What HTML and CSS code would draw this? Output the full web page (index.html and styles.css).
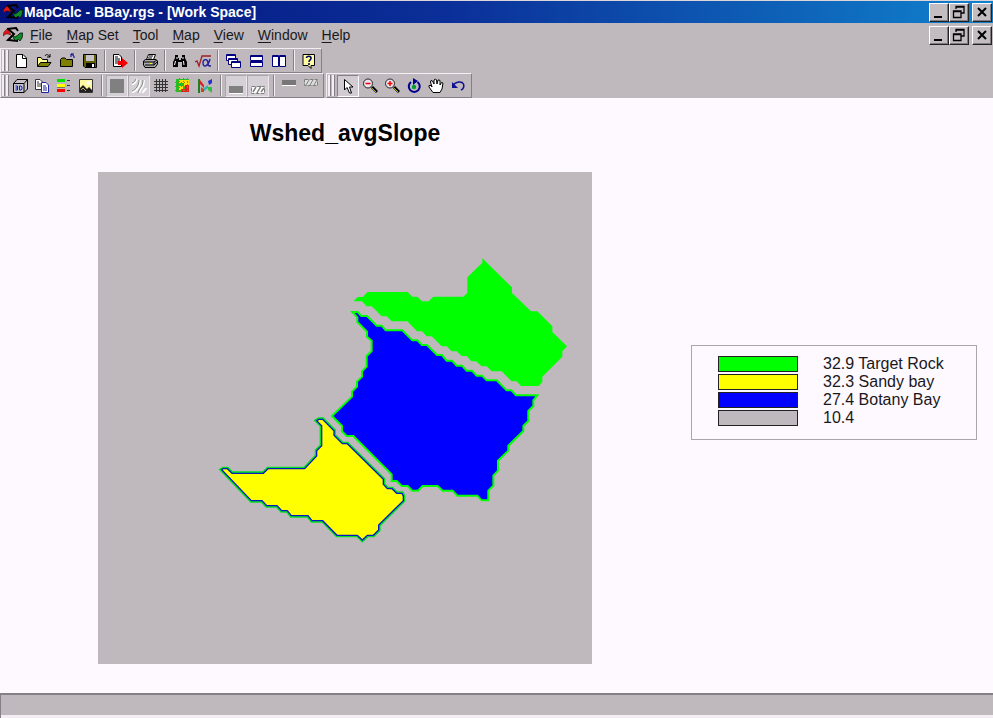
FILE: index.html
```html
<!DOCTYPE html>
<html lang="en">
<head>
<meta charset="utf-8">
<title>MapCalc - BBay.rgs - [Work Space]</title>
<link rel="stylesheet" href="styles.css">
</head>
<body>
<svg class="defs" aria-hidden="true">
  <symbol id="logo" viewBox="0 0 20 16">
    <path d="M4 2L13 1L15 4M5 2L11 7L5 13L15 14" fill="none" stroke="#000" stroke-width="2"/>
    <path d="M0 9L1 5L4 2L6 4L8 8L5 7L3 7Z" fill="#e01818" stroke="#400" stroke-width=".5"/>
    <path d="M9 8L12 10L15 8L17 6L20 6L19 11L17 14L15 12L13 14L11 12Z" fill="#108a28" stroke="#000" stroke-width=".7"/>
  </symbol>
  <symbol id="min" viewBox="0 0 16 14"><path d="M3 11H11V13H3Z"/></symbol>
  <symbol id="restore" viewBox="0 0 16 14"><path d="M5 4V1.500H13V8H10M5 2H13M2.500 6H10V12.500H2.500ZM2.500 6.500H10" fill="none" stroke="#000" stroke-width="1.300"/></symbol>
  <symbol id="close" viewBox="0 0 16 14"><path d="M4 3L12 11M12 3L4 11" stroke="#000" stroke-width="2"/></symbol>
</svg>

<header class="titlebar">
  <svg class="logo"><use href="#logo"/></svg>
  <h1 class="caption">MapCalc - BBay.rgs - [Work Space]</h1>
  <div class="controls">
    <button aria-label="Minimize"><svg><use href="#min"/></svg></button>
    <button aria-label="Restore"><svg><use href="#restore"/></svg></button>
    <button class="apart" aria-label="Close"><svg><use href="#close"/></svg></button>
  </div>
</header>

<nav class="menubar">
  <svg class="logo"><use href="#logo"/></svg>
  <div class="menus">
    <button><u>F</u>ile</button>
    <button><u>M</u>ap Set</button>
    <button><u>T</u>ool</button>
    <button><u>M</u>ap</button>
    <button><u>V</u>iew</button>
    <button><u>W</u>indow</button>
    <button><u>H</u>elp</button>
  </div>
  <div class="controls">
    <button aria-label="Minimize map"><svg><use href="#min"/></svg></button>
    <button aria-label="Restore map"><svg><use href="#restore"/></svg></button>
    <button class="apart" aria-label="Close map"><svg><use href="#close"/></svg></button>
  </div>
</nav>

<div class="toolrow">
  <div class="toolbar standard">
    <button aria-label="New"><svg viewBox="0 0 16 16"><path d="M3.500 1.500H10L13.500 5V14.500H3.500Z" fill="#fff" stroke="#000"/><path d="M9.500 1.500V5.500H13.500" fill="none" stroke="#000"/></svg></button>
    <button aria-label="Open"><svg viewBox="0 0 16 16"><path d="M1.500 13.500V4.500H5L6.500 6.500H11.500V9" fill="#ffff90" stroke="#000"/><path d="M1.500 13.500L4.500 9.500H15L12 13.500Z" fill="#808000" stroke="#000"/><path d="M9 3C10 1 12 1 14 4M14 1V4H11" fill="none" stroke="#000"/></svg></button>
    <button aria-label="Close folder"><svg viewBox="0 0 16 16"><path d="M1.500 13.500V6.500L3 5H6L7.500 6.500H13.500V13.500Z" fill="#808000" stroke="#000"/><path d="M15 5V3L12 1M12 4V1H15" fill="none" stroke="#000090"/></svg></button>
    <button aria-label="Save"><svg viewBox="0 0 16 16"><path d="M1.500 1.500H14.500V14.500H3L1.500 13Z" fill="#606000" stroke="#000"/><path d="M4 2H12V8H4Z" fill="#c8c3c8"/><path d="M4 10H13V15H4Z"/><path d="M10 11H12V14H10Z" fill="#fff"/></svg></button>
    <span class="sep"></span>
    <button aria-label="Export"><svg viewBox="0 0 16 16"><path d="M1.500 1.500H7L9.500 4V13.500H1.500Z" fill="#fff" stroke="#000"/><path d="M3 4H6M3 6H8M3 8H8M3 10H8" stroke="#000"/><path d="M6 8H10V5L16 10L10 15V12H6Z" fill="#f00000"/></svg></button>
    <span class="sep"></span>
    <button aria-label="Print"><svg viewBox="0 0 16 16"><path d="M4.500 6.500L6.500 1.500H13.500L11.500 6.500" fill="#fff" stroke="#000"/><path d="M1.500 8L3.500 6.500H14L15.500 8V11L13 14.500H3L1.500 12Z" fill="#aaa" stroke="#000"/><path d="M2 9H12V12H3M12 9L15 7M7 3H11M6 5H10M12 12L15 9" fill="none" stroke="#000"/><path d="M8 10H10V11H8Z" fill="#ff0"/></svg></button>
    <span class="sep"></span>
    <button aria-label="Find"><svg viewBox="0 0 16 16"><path d="M3 2H6V5H7V7H9V5H10V2H13V5L15 9V14H10V9H6V14H1V9L3 5Z"/><path d="M3.500 8L2.500 12M5 4V6M11.500 8L12 12M11 4V6" stroke="#fff"/></svg></button>
    <button aria-label="Formula"><svg viewBox="0 0 16 16"><path d="M0 9L2 8L4 13L7 3H16" fill="none" stroke="#a02020" stroke-width="1.300"/><path d="M15 6C13 14 8 15 8 10C8 5 13 6 13 10C13 13 14 13 16 13" fill="none" stroke="#2020a0" stroke-width="1.400"/></svg></button>
    <span class="sep"></span>
    <button aria-label="Cascade"><svg viewBox="0 0 16 16"><g fill="#fff" stroke="#000080"><path d="M1.500 1.500H10.500V7.500H1.500ZM1 2.500H11"/><path d="M3.500 5.500H12.500V11.500H3.500ZM3 6.500H13"/><path d="M6.500 8.500H15.500V14.500H6.500ZM6 9.500H16"/></g></svg></button>
    <button aria-label="Tile horizontally"><svg viewBox="0 0 16 16"><g fill="#fff" stroke="#000080"><path d="M2.500 2.500H14.500V7.500H2.500ZM2 3.500H15"/><path d="M2.500 8.500H14.500V13.500H2.500ZM2 9.500H15"/></g></svg></button>
    <button aria-label="Tile vertically"><svg viewBox="0 0 16 16"><g fill="#fff" stroke="#000080"><path d="M1.500 2.500H7.500V13.500H1.500ZM1 3.500H8"/><path d="M8.500 2.500H14.500V13.500H8.500ZM8 3.500H15"/></g></svg></button>
    <span class="sep"></span>
    <button aria-label="Help"><svg viewBox="0 0 16 16"><path d="M2 1.500H13.500V12.500H10V15.500L7 12.500H2Z" fill="#fffda0" stroke="#000"/><path d="M5.500 5C5.500 2.500 10.500 2.500 10 5.500C10 7 8 7 8 9M8 10V12" fill="none" stroke="#000060" stroke-width="1.600"/></svg></button>
  </div>
</div>

<div class="toolrow">
  <div class="toolbar display">
    <button aria-label="3D view"><svg viewBox="0 0 16 16"><path d="M1.500 5.500L5 1.500H15.500V11L12 14.500H1.500ZM1.500 5.500H12V14.500M12 5.500L15.500 1.500" fill="#c8c3c8" stroke="#000"/><path d="M3.500 8H5.500V12H3.500M3.500 10H5.500M7.500 8V12H9L10 11V9L9 8Z" fill="none" stroke="#0020c0"/></svg></button>
    <button aria-label="Copy"><svg viewBox="0 0 16 16"><path d="M1.500 1.500H6L8.500 4V11.500H1.500Z" fill="#fff" stroke="#333"/><path d="M3 4H5M3 6H7M3 8H7" stroke="#333"/><path d="M7.500 4.500H12L14.500 7V14.500H7.500Z" fill="#fff" stroke="#2020a0"/><path d="M9 8H12M9 10H13M9 12H13" stroke="#2020a0"/></svg></button>
    <button aria-label="Legend"><svg viewBox="0 0 16 16"><path d="M1 1H9V4H1Z" fill="#00e000"/><path d="M1 6H9V9H1Z" fill="#ff0"/><path d="M1 11H9V14H1Z" fill="#f00"/><path d="M1 9.500H9" stroke="#776"/><path d="M11 2.500H14M11 7.500H14M11 12.500H14" stroke="#333"/></svg></button>
    <button aria-label="Picture"><svg viewBox="0 0 16 16"><path d="M1.500 1.500H14.500V14.500H1.500Z" fill="#fffba0" stroke="#333"/><circle cx="10.500" cy="5" r="2" fill="#fff"/><path d="M2 10L5 7L9 11L11 9L14 12V14H2Z" fill="#202020"/><path d="M3 12L5 10L8 13" fill="none" stroke="#c0b060"/></svg></button>
    <span class="sep"></span>
    <button class="checked" aria-label="Solid fill"><svg viewBox="0 0 16 16"><path d="M1 1H15V15H1Z" fill="#808080"/></svg></button>
    <button class="checked" aria-label="Contours"><svg viewBox="0 0 16 16"><path d="M1 6C5 6 5 2 6 1M1 14C6 13 9 8 9 2M8 15C9 10 13 10 13 2M12 15C12 12 15 12 15 10" fill="none" stroke="#fff" stroke-width="2"/><path d="M1 5C4 5 4 2 5 1M1 13C5 12 8 7 8 2M7 15C8 10 12 9 12 2" fill="none" stroke="#808080"/></svg></button>
    <button aria-label="Grid"><svg viewBox="0 0 16 16"><path d="M3.500 1V14M6.500 1V14M9.500 1V14M12.500 1V14M1 3.500H15M1 6.500H15M1 9.500H15M1 12.500H15" stroke="#333"/></svg></button>
    <button aria-label="Coloured grid"><svg viewBox="0 0 16 16"><path d="M1 1H14V14H1Z" fill="#20c020"/><path d="M4 2H14V8H9V5H4ZM4 8H8V12H4Z" fill="#ffe000"/><path d="M10 7H14V14H6V11H10Z" fill="#e02020"/><path d="M4.500 0V15M8.500 0V15M12.500 0V15M0 4.500H15M0 8.500H15M0 12.500H15" stroke="#8a8a20" stroke-dasharray="1 2"/></svg></button>
    <button aria-label="Profile"><svg viewBox="0 0 16 16"><path d="M1 1H3V15H1Z" fill="#208020"/><path d="M3 2L7 7V10L3 6Z" fill="#e02020"/><path d="M4 14V9L7 11V14Z" fill="#d04020"/><path d="M7 10L11 7V10L7 13Z" fill="#30b0b0"/><path d="M11 3L15 1V5L12 7Z" fill="#2030d0"/><path d="M11 9H15V15L11 12Z" fill="#30c040"/></svg></button>
    <span class="sep"></span>
    <button class="checked" aria-label="Lower solid"><svg viewBox="0 0 16 16"><path d="M1 8H15V15H1Z" fill="#808080"/><path d="M1 15.500H15" stroke="#fff"/></svg></button>
    <button class="checked" aria-label="Lower hatched"><svg viewBox="0 0 16 16"><path d="M1.500 8.500H14.500V15.500H1.500Z" fill="#fff" stroke="#808080" stroke-dasharray="4 1"/><path d="M3 14L6 9M7 15L11 8M11 14L14 10" stroke="#808080" stroke-width="1.500"/></svg></button>
    <span class="sep"></span>
    <button aria-label="Upper solid"><svg viewBox="0 0 16 16"><path d="M1 2H15V7H1Z" fill="#777"/><path d="M1 7.500H15" stroke="#fff"/></svg></button>
    <button aria-label="Upper hatched"><svg viewBox="0 0 16 16"><path d="M1.500 1.500H14.500V7.500H1.500Z" fill="#ddd" stroke="#808080" stroke-dasharray="4 1"/><path d="M3 7L6 2M7 7L10 2M11 7L14 2" stroke="#808080"/></svg></button>
  </div>
  <div class="toolbar pointer">
    <button class="pressed" aria-label="Select"><svg viewBox="0 0 16 16"><path d="M4.500 1.500V12L7 9.500L9.500 15H11.500L9.500 9H13Z" fill="#fff" stroke="#000"/></svg></button>
    <button aria-label="Zoom out"><svg viewBox="0 0 16 16"><path d="M10 9L15 14" stroke="#000" stroke-width="3"/><path d="M10 10L14 14" stroke="#c0b000"/><circle cx="6" cy="5.500" r="4.500" fill="#eee4ee" stroke="#222"/><path d="M3.500 5.500H8.500" stroke="#f00000" stroke-width="1.500"/></svg></button>
    <button aria-label="Zoom in"><svg viewBox="0 0 16 16"><path d="M10 9L15 14" stroke="#000" stroke-width="3"/><path d="M10 10L14 14" stroke="#c0b000"/><circle cx="6" cy="5.500" r="4.500" fill="#eee4ee" stroke="#222"/><path d="M3.500 5.500H8.500M6 3V8" stroke="#f00000" stroke-width="1.500"/></svg></button>
    <button aria-label="Rotate"><svg viewBox="0 0 16 16"><path d="M11.500 4A5.500 5.500 0 1 1 5 4" fill="none" stroke="#000090" stroke-width="2"/><path d="M7 0L12 3L7 7Z" fill="#000090"/><circle cx="8" cy="9" r="2.200" fill="#00a030"/></svg></button>
    <button aria-label="Pan"><svg viewBox="0 0 16 16"><path d="M5 14.500L1 9L1 7.500H3L4 9L2.500 4L3 2.500L4.500 3L6 6L6 2L7.500 1L8.500 2L9 6L10 2L11.500 2L12 3L12 7L13.500 4.500L15 5L14 11L12 14.500Z" fill="#fff" stroke="#000"/></svg></button>
    <button aria-label="Undo"><svg viewBox="0 0 16 16"><path d="M2.500 8C6 3 12 3 13.500 6C14.500 9 13 11 11 12" fill="none" stroke="#101090" stroke-width="1.500"/><path d="M2 4V10H8Z" fill="#101090"/></svg></button>
  </div>
</div>

<main class="workspace">
  <figure class="map">
    <figcaption>Wshed_avgSlope</figcaption>
    <svg class="plot" viewBox="98 172 494 492" role="img" aria-label="Average slope by watershed">
      <path d="M98 172H592V664H98Z" fill="#bfb9be"/>
      <g transform="translate(340 250) scale(.333333)">
        <path fill="#0f0" d="M427 25L516 112V129L573 184H592L637 229V246L681 289L667 304V320L607 380V396L596 408H543L530 394H515L485 364H455L440 349H425L408 334H394L380 318H365L350 304H335L320 289H305L275 259H260L246 244H231L202 214H155L140 199H125L95 169H80L66 154H40L53 141H68L83 126H203L217 140H232L246 154H266L280 140H370L382 128V82L427 38Z"/>
      </g>
      <g transform="translate(320 300) scale(.333333)">
        <path fill="#00f" stroke="#0f0" stroke-width="6" d="M97 36H113L124 48H141L170 77H185L197 91H247L277 121H292L306 135H321L351 165H366L380 182H396L410 197H426L440 212H456L470 227H486L500 241H530L560 271H574L588 286H652L640 301V318L625 333V363L610 378V393L565 437V452L534 482V512L520 527V557L505 572V601H485L472 587H412L398 572H368L353 558H308L294 572H277L263 558H245L230 543H215V523L100 408H80L66 394V378L36 348L96 290V275L111 260V245L126 230V214L140 200V168L155 153V122L141 110V95L112 66V52Z"/>
      </g>
      <g transform="translate(210 410) scale(.333333)">
        <path fill="none" stroke="#00e020" stroke-width="12" d="M35 179L40 176H52L66 190H160L174 176H284L320 138V122L335 107V47L320 32L327 28H338L372 62V76L397 101H412L520 208V223L532 236H546L560 250H576L580 258V272L506 345V360L490 376H472L457 390L442 376H381L338 332H306L294 317H244L232 302H215L201 287H170L156 272H124Z"/>
        <path fill="#ff0" stroke="#0818c0" stroke-width="4" d="M35 179L40 176H52L66 190H160L174 176H284L320 138V122L335 107V47L320 32L327 28H338L372 62V76L397 101H412L520 208V223L532 236H546L560 250H576L580 258V272L506 345V360L490 376H472L457 390L442 376H381L338 332H306L294 317H244L232 302H215L201 287H170L156 272H124Z"/>
      </g>
    </svg>
  </figure>
  <ul class="legend">
    <li><span class="swatch target"></span>32.9 Target Rock</li>
    <li><span class="swatch sandy"></span>32.3 Sandy bay</li>
    <li><span class="swatch botany"></span>27.4 Botany Bay</li>
    <li><span class="swatch other"></span>10.4</li>
  </ul>
</main>
<footer class="status"></footer>
</body>
</html>
```
FILE: styles.css
```css
*,
*::before { box-sizing: border-box; }

body {
  margin: 0;
  min-height: 100vh;
  display: flex;
  flex-direction: column;
  background: #bfb9be;
  color: #000;
  font-family: "Liberation Sans", Arial, sans-serif;
}

button {
  margin: 0;
  padding: 0;
  border: 0;
  background: none;
  color: inherit;
  font: inherit;
}

svg { display: block; }
.defs { width: 0; height: 0; position: absolute; }

.titlebar,
.menubar {
  display: flex;
  align-items: center;
  padding: 0 1px 0 3px;
}

.titlebar {
  height: 23px;
  border-top: 1px solid #dcd6dc;
  background: linear-gradient(90deg, #04127c, #0b2f98 45%, #1081cc);
  color: #fff;
}

.menubar { height: 25px; padding-bottom: 1px; }

.logo { flex: none; width: 20px; height: 16px; }

.caption {
  margin: 0 auto 0 1px;
  font-size: 14px;
  line-height: 20px;
  white-space: nowrap;
}

.menus {
  display: flex;
  gap: 14px;
  margin: 0 auto 0 7px;
  color: #1a181a;
  font-size: 14px;
  line-height: 20px;
}

.menus u { text-underline-offset: 2px; }

.controls { display: flex; }

.controls button {
  width: 20px;
  height: 19px;
  padding: 1px;
  background: #c3bdc2;
  border: 1px solid;
  border-color: #fff #222 #222 #fff;
  box-shadow: inset -1px -1px #807b80;
}

.controls .apart { margin-left: 3px; }
.controls svg { width: 16px; height: 14px; }

.toolrow { display: flex; height: 25px; }

.toolbar {
  display: flex;
  align-items: center;
  border: 1px solid;
  border-color: #f4eef4 #858085 #858085 #f4eef4;
}

.toolbar::before {
  content: "";
  flex: none;
  width: 7px;
  height: 21px;
  background: linear-gradient(90deg, #f4eef4 2px, #858085 2px 3px, #bfb9be 3px 4px, #f4eef4 4px 6px, #858085 6px);
}

.standard { gap: 1px; padding-right: 1px; }
.standard::before,
.display::before { margin-left: 1px; }
.display { padding-right: 1px; }
.pointer { margin-left: 2px; padding-right: 2px; }
.pointer::before { margin: 0 2px 0 1px; }

.toolbar button {
  flex: none;
  display: grid;
  place-items: center;
  width: 22px;
  height: 22px;
}

.toolbar button svg { width: 16px; height: 16px; }

.toolbar .checked {
  background: #d5d0d5;
  border: 1px solid;
  border-color: #aaa5aa #eee8ee #eee8ee #aaa5aa;
}

.toolbar .pressed {
  background: #d2ccd2;
  border: 1px solid;
  border-color: #858085 #fff #fff #858085;
}

.sep {
  flex: none;
  width: 6px;
  height: 21px;
  background: linear-gradient(90deg, #0000 2px, #858085 2px 3px, #f4eef4 3px 4px, #0000 4px);
}

.display .sep { width: 9px; background-position: 2px 0; background-repeat: no-repeat; }

.workspace {
  flex: 1;
  display: flex;
  align-items: center;
  gap: 99px;
  padding: 0 16px 6px 98px;
  background: #fef9ff;
}

.map {
  flex: 1;
  align-self: flex-start;
  min-width: 0;
  margin: 0;
}

.map figcaption {
  padding: 22px 0 26px;
  font-size: 23px;
  line-height: 26px;
  font-weight: bold;
  text-align: center;
}

.plot { width: 100%; height: auto; }

.legend {
  flex: 0 0 286px;
  margin: 0;
  padding: 9px 26px 12px;
  border: 1px solid #aaa6aa;
  list-style: none;
  color: #1a181a;
  font-size: 16px;
  line-height: 18px;
}

.legend li {
  display: flex;
  align-items: center;
  gap: 25px;
}

.swatch {
  width: 80px;
  height: 16px;
  border: 1px solid #222;
}

.target { background: #0f0; }
.sandy { background: #ff0; }
.botany { background: #00f; }
.other { background: #bfb9be; }

.status {
  height: 25px;
  border: solid #858085;
  border-width: 2px 0 0 1px;
  box-shadow: inset 0 -3px #f4eef4;
}
```
